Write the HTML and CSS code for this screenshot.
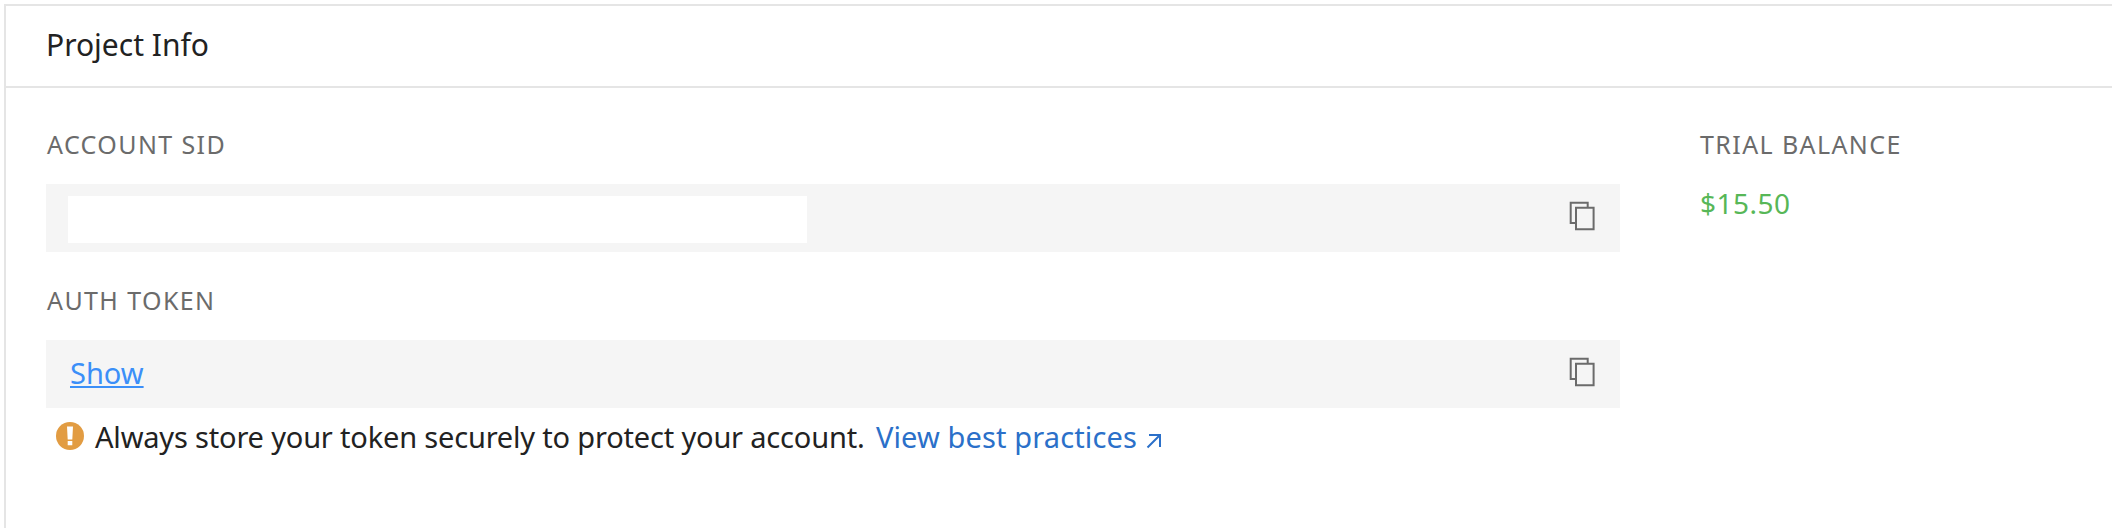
FILE: index.html
```html
<!DOCTYPE html>
<html lang="en">
<head>
<meta charset="utf-8">
<title>Project Info</title>
<link rel="stylesheet" href="styles.css">
</head>
<body>
<section class="panel">
  <header class="panel-header"><h2 class="title">Project Info</h2></header>
  <div class="panel-body">
    <div class="credentials">
      <div class="label">Account SID</div>
      <div class="field">
        <div class="redacted"></div>
        <svg class="copy" viewBox="0 0 26 30"><path d="M7 22H1.7V1.7H18.7V6"/><path d="M7 6.7H24.6V28.3H7Z"/></svg>
      </div>
      <div class="label label-next">Auth Token</div>
      <div class="field">
        <a class="show" href="#">Show</a>
        <svg class="copy" viewBox="0 0 26 30"><path d="M7 22H1.7V1.7H18.7V6"/><path d="M7 6.7H24.6V28.3H7Z"/></svg>
      </div>
      <p class="note">
        <svg class="warn" viewBox="0 0 28 28"><circle cx="14" cy="14" r="14" fill="#e29c42"/><path fill="#fff" d="M11 4.5H17L16.3 17.5H11.7ZM11.7 19H16.3V23.2H11.7Z"/></svg>
        <span class="note-text">Always store your token securely to protect your account.</span>
        <a class="practices" href="#">View best practices</a>
        <svg class="arrow" viewBox="0 0 16 16"><path d="M1.5 14.5L14 2M3 2H14V14"/></svg>
      </p>
    </div>
    <div class="balance">
      <div class="label">Trial Balance</div>
      <div class="amount">$15.50</div>
    </div>
  </div>
</section>
</body>
</html>
```
FILE: styles.css
```css
* { box-sizing: border-box; }
body { margin: 0; height: 528px; overflow: hidden; background: #fff; font-family: "Noto Sans", "Open Sans", sans-serif; color: #222; }
.panel { margin: 4px 0 0 4px; height: 524px; border-top: 2px solid #e5e5e5; border-left: 2px solid #e5e5e5; }
.panel-header { height: 82px; padding: 0 0 3px 40px; border-bottom: 2px solid #e5e5e5; display: flex; align-items: center; }
.title { margin: 0; font-size: 30px; font-weight: 400; line-height: 40px; }
.panel-body { display: flex; gap: 80px; padding: 42px 0 0 40px; }
.credentials { width: 1574px; }
.label { height: 28px; margin-bottom: 26px; padding-left: 1px; font-size: 25px; line-height: 28px; letter-spacing: 1.4px; color: #6b6b6b; text-transform: uppercase; white-space: nowrap; }
.label-next { margin-top: 34px; }
.balance .label { padding-left: 0; }
.field { display: flex; align-items: flex-start; justify-content: space-between; height: 68px; padding: 0 25px 0 22px; background: #f5f5f5; }
.redacted { width: 739px; height: 47px; margin-top: 12px; background: #fff; }
.copy { width: 26px; height: 30px; margin-top: 17px; fill: none; stroke: #6b6b6b; stroke-width: 2; }
.show { margin: 15px 0 0 2px; font-size: 29px; line-height: 36px; color: #3b8ff8; text-decoration: underline; text-decoration-thickness: 2px; text-underline-offset: 2px; text-decoration-skip-ink: none; }
.note { display: flex; align-items: flex-start; margin: 11px 0 0 10px; font-size: 29px; line-height: 36px; white-space: nowrap; }
.warn { width: 28px; height: 28px; margin: 3px 11px 0 0; }
.note-text { width: 781px; letter-spacing: -.18px; }
.practices { width: 270px; color: #2b70c9; letter-spacing: .12px; text-decoration: none; }
.arrow { width: 16px; height: 16px; margin-top: 14px; fill: none; stroke: #2b70c9; stroke-width: 2; }
.amount { margin-top: 27px; font-size: 28px; line-height: 36px; letter-spacing: .5px; color: #57b757; }
```
